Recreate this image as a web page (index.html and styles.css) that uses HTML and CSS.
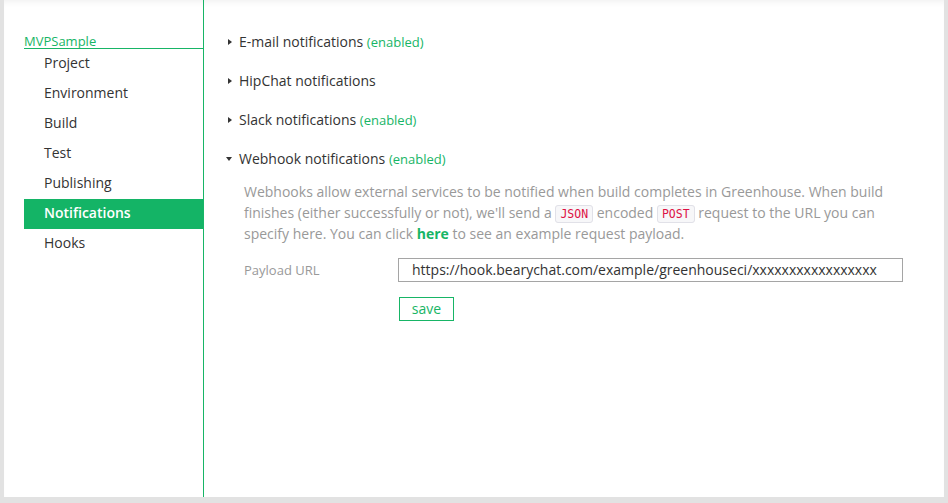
FILE: index.html
```html
<!DOCTYPE html>
<html>
<head>
<meta charset="utf-8">
<link rel="stylesheet" href="styles.css">
</head>
<body>
<div class="panel">
  <aside class="sidebar">
    <div class="project">MVPSample</div>
    <ul class="menu">
      <li>Project</li>
      <li>Environment</li>
      <li>Build</li>
      <li>Test</li>
      <li>Publishing</li>
      <li class="active">Notifications</li>
      <li>Hooks</li>
    </ul>
  </aside>
  <main class="content">
    <div class="section">
      <div class="head"><span class="caret right"></span>E-mail notifications <span class="enabled">(enabled)</span></div>
    </div>
    <div class="section">
      <div class="head"><span class="caret right"></span>HipChat notifications</div>
    </div>
    <div class="section">
      <div class="head"><span class="caret right"></span>Slack notifications <span class="enabled">(enabled)</span></div>
    </div>
    <div class="section open">
      <div class="head"><span class="caret down"></span>Webhook notifications <span class="enabled">(enabled)</span></div>
      <div class="body">
        <p class="desc">Webhooks allow external services to be notified when build completes in Greenhouse. When build finishes (either successfully or not), we'll send a <code>JSON</code> encoded <code>POST</code> request to the URL you can specify here. You can click <a class="link">here</a> to see an example request payload.</p>
        <div class="field">
          <label class="label">Payload URL</label>
          <div class="input">https://hook.bearychat.com/example/greenhouseci/xxxxxxxxxxxxxxxxx</div>
        </div>
        <div class="actions">
          <button class="save">save</button>
        </div>
      </div>
    </div>
  </main>
</div>
</body>
</html>
```
FILE: styles.css
```css
html, body {
  margin: 0;
  padding: 0;
}
body {
  width: 948px;
  height: 503px;
  background: #e2e2e2;
  font-family: "Open Sans", "DejaVu Sans", sans-serif;
  color: #333;
  overflow: hidden;
}
.panel {
  margin-left: 4px;
  width: 940px;
  height: 497px;
  background: #fff;
  display: flex;
  box-shadow: inset 0 6px 6px -4px rgba(0,0,0,0.06);
}
.sidebar {
  margin-left: 20px;
  width: 179px;
  border-right: 1px solid #17b566;
  padding-top: 33px;
}
.project {
  color: #17b566;
  font-size: 13px;
  line-height: 16px;
  border-bottom: 1.5px solid #17b566;
  height: 15px;
}
.menu {
  list-style: none;
  margin: 0;
  padding: 0;
}
.menu li {
  height: 30px;
  line-height: 28px;
  padding-left: 20px;
  font-size: 14px;
  color: #333;
}
.menu li.active {
  background: #14b466;
  color: #fff;
  font-weight: 600;
}
.content {
  flex: 1;
  padding-top: 31px;
  padding-left: 21px;
}
.section {
  margin-bottom: 17px;
}
.head {
  font-size: 14px;
  line-height: 22px;
  color: #333;
  display: flex;
  align-items: center;
  white-space: pre;
}
.enabled {
  color: #17b566;
  font-size: 13px;
}
.caret {
  width: 0;
  height: 0;
  margin-right: 7px;
  margin-left: 3px;
}
.caret.right {
  border-top: 3.5px solid transparent;
  border-bottom: 3.5px solid transparent;
  border-left: 4px solid #333;
}
.caret.down {
  border-left: 3.5px solid transparent;
  border-right: 3.5px solid transparent;
  border-top: 4px solid #333;
  margin-left: 1px;
  margin-right: 7px;
}
.body {
  padding-left: 19px;
  padding-top: 11px;
}
.desc {
  margin: 0;
  color: #999;
  font-size: 14px;
  line-height: 21px;
  width: 660px;
}
code {
  font-family: "DejaVu Sans Mono", "Liberation Mono", monospace;
  font-size: 11.5px;
  line-height: 1;
  color: #dd1144;
  background: #f7f7f9;
  border: 1px solid #e1e1e8;
  border-radius: 3px;
  padding: 1px 4px;
}
.link {
  color: #17b566;
  font-weight: 700;
}
.field {
  display: flex;
  align-items: center;
  margin-top: 14px;
}
.label {
  width: 154px;
  font-size: 13px;
  color: #999;
}
.input {
  width: 490px;
  height: 22px;
  border: 1px solid #a5a5a5;
  padding-left: 13px;
  font-size: 14px;
  line-height: 22px;
  color: #333;
}
.actions {
  margin-top: 15px;
  padding-left: 155px;
}
.save {
  font-family: "Open Sans", "DejaVu Sans", sans-serif;
  font-size: 14px;
  color: #17b566;
  background: #fff;
  border: 1px solid #17b566;
  width: 55px;
  height: 24px;
  padding: 0;
  line-height: 20px;
}
```
